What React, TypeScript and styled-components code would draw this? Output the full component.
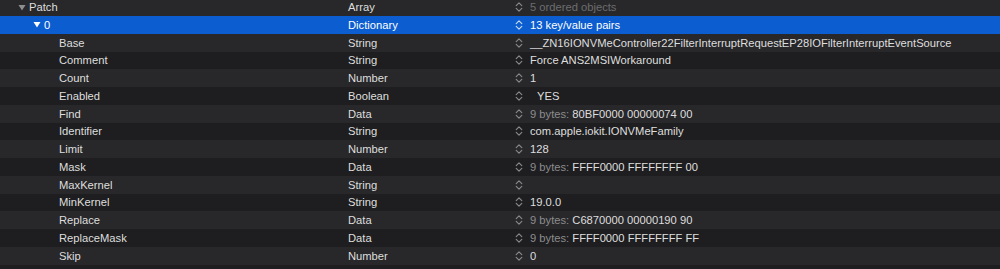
import React from "react";
import styled, { createGlobalStyle } from "styled-components";

const Global = createGlobalStyle`
  html, body { margin: 0; padding: 0; background: #1e1e20; overflow: hidden; }
  body { font-family: "Liberation Sans", Arial, Helvetica, sans-serif; }
`;

const Table = styled.div`
  display: flex;
  flex-direction: column;
  margin-top: -1.75px;
  width: 1000px;
`;

const Row = styled.div<{ $stripe: "light" | "dark" | "sel" }>`
  display: grid;
  grid-template-columns: 330px 184px 1fr;
  align-items: center;
  height: 17.75px;
  font-size: 11.2px;
  background: ${(p) =>
    p.$stripe === "sel" ? "#0b5dd0" : p.$stripe === "light" ? "#28282a" : "#1e1e20"};
  color: ${(p) => (p.$stripe === "sel" ? "#ffffff" : "#dedede")};
  white-space: nowrap;
`;

const KeyCell = styled.div<{ $level: number }>`
  display: flex;
  align-items: center;
  padding-left: ${(p) => 18 + p.$level * 15}px;
`;

const Disclosure = styled.span`
  display: inline-flex;
  width: 11px;
  align-items: center;
`;

const TypeCell = styled.div`
  padding-left: 18px;
`;

const ValueCell = styled.div`
  display: flex;
  align-items: center;
`;

const Stepper = styled.span`
  display: inline-flex;
  width: 15px;
  align-items: center;
  padding-left: 1px;
`;

const Value = styled.span<{ $tone?: "muted" | "normal"; $indent?: number }>`
  color: ${(p) => (p.$tone === "muted" ? "#6c6c6e" : "inherit")};
  padding-left: ${(p) => p.$indent ?? 0}px;
`;

const Prefix = styled.span`
  color: #8c8c8e;
`;

const Triangle = ({ color }: { color: string }) => (
  <svg width="8" height="7" viewBox="0 0 8 7">
    <path d="M0.5 1 L7.5 1 L4 6.5 Z" fill={color} />
  </svg>
);

const Chevrons = ({ color }: { color: string }) => (
  <svg width="8" height="12" viewBox="0 0 8 12">
    <path
      d="M1.2 4.6 L4 1.8 L6.8 4.6 M1.2 7.4 L4 10.2 L6.8 7.4"
      fill="none"
      stroke={color}
      strokeWidth="1.15"
      strokeLinecap="round"
      strokeLinejoin="round"
    />
  </svg>
);

type Item = {
  key: string;
  level: number;
  type: string;
  value: React.ReactNode;
  open?: boolean;
  muted?: boolean;
  indent?: number;
};

const bytes = (hex: string) => (
  <>
    <Prefix>9 bytes: </Prefix>
    {hex}
  </>
);

const items: Item[] = [
  { key: "Patch", level: 0, type: "Array", value: "5 ordered objects", open: true, muted: true },
  { key: "0", level: 1, type: "Dictionary", value: "13 key/value pairs", open: true },
  { key: "Base", level: 2, type: "String", value: "__ZN16IONVMeController22FilterInterruptRequestEP28IOFilterInterruptEventSource" },
  { key: "Comment", level: 2, type: "String", value: "Force ANS2MSIWorkaround" },
  { key: "Count", level: 2, type: "Number", value: "1" },
  { key: "Enabled", level: 2, type: "Boolean", value: "YES", indent: 7 },
  { key: "Find", level: 2, type: "Data", value: bytes("80BF0000 00000074 00") },
  { key: "Identifier", level: 2, type: "String", value: "com.apple.iokit.IONVMeFamily" },
  { key: "Limit", level: 2, type: "Number", value: "128" },
  { key: "Mask", level: 2, type: "Data", value: bytes("FFFF0000 FFFFFFFF 00") },
  { key: "MaxKernel", level: 2, type: "String", value: "" },
  { key: "MinKernel", level: 2, type: "String", value: "19.0.0" },
  { key: "Replace", level: 2, type: "Data", value: bytes("C6870000 00000190 90") },
  { key: "ReplaceMask", level: 2, type: "Data", value: bytes("FFFF0000 FFFFFFFF FF") },
  { key: "Skip", level: 2, type: "Number", value: "0" },
];

export default function App() {
  return (
    <>
      <Global />
      <Table>
        {items.map((it, i) => {
          const sel = i === 1;
          const stripe = sel ? "sel" : i % 2 === 0 ? "light" : "dark";
          return (
            <Row key={it.key + i} $stripe={stripe}>
              <KeyCell $level={it.open ? it.level : 2}>
                <Disclosure>
                  {it.open && <Triangle color={sel ? "#ffffff" : "#8e8e90"} />}
                </Disclosure>
                {it.key}
              </KeyCell>
              <TypeCell>{it.type}</TypeCell>
              <ValueCell>
                <Stepper>
                  <Chevrons color={sel ? "#c9dcf6" : "#8a8a8c"} />
                </Stepper>
                <Value $tone={it.muted ? "muted" : "normal"} $indent={it.indent}>
                  {it.value}
                </Value>
              </ValueCell>
            </Row>
          );
        })}
      </Table>
    </>
  );
}
